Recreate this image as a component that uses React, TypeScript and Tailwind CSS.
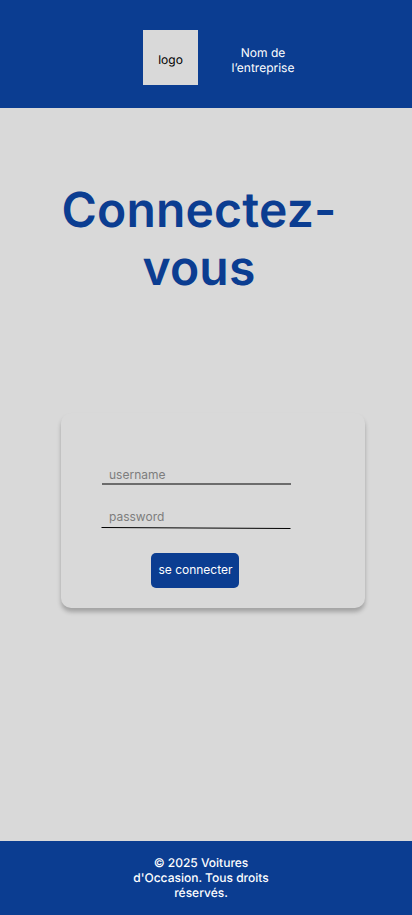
export default function App() {
  return (
    <div className="flex h-[915px] w-[412px] flex-col overflow-hidden bg-[#d9d9d9] font-['Inter',sans-serif] text-xs leading-[15px] [text-rendering:geometricPrecision]">
      <header className="flex h-[108px] shrink-0 items-start bg-[#0b3d91] pt-[30px] pl-[143px]">
        <div className="flex size-[55px] items-center justify-center bg-[#d9d9d9] pt-1 text-black">logo</div>
        <p className="mt-[15px] ml-[25px] w-20 text-center text-white">
          Nom de
          <br />
          l’entreprise
        </p>
      </header>

      <main className="flex flex-1 flex-col">
        <h1 className="mt-[73px] ml-[49px] w-[300px] text-center text-5xl leading-[58px] font-semibold tracking-[0.2px] text-[#0b3d91]">
          Connectez-
          <br />
          vous
        </h1>

        <form
          className="mt-[116px] ml-[61px] flex h-[195px] w-[304px] flex-col rounded-[10px] bg-[#d9d9d9] pt-[54px] pl-[41px] shadow-[0_4px_4px_rgba(0,0,0,0.25)]"
          onSubmit={(e) => e.preventDefault()}
        >
          <input
            aria-label="username"
            placeholder="username"
            className="h-[15px] w-[189px] pl-[7px] outline-none placeholder:text-[#7d7d7d]"
          />
          <div className="mt-px h-0.5 w-[189px] bg-[#6c6c6c]" />
          <input
            type="password"
            aria-label="password"
            placeholder="password"
            className="mt-6 h-[15px] w-[189px] pl-[7px] outline-none placeholder:text-[#7d7d7d]"
          />
          <svg className="mt-[3px] -ml-px h-[3px] w-[190px]" viewBox="0 0 190 3" fill="none" stroke="black">
            <path d="M.5 .5L189.5 1.5" />
          </svg>
          <button
            type="submit"
            className="mt-[23px] ml-[49px] h-[35px] w-[88px] rounded-[5px] bg-[#0b3d91] pb-0.5 pl-px text-center whitespace-nowrap text-white"
          >
            se connecter
          </button>
        </form>
      </main>

      <footer className="h-[74px] shrink-0 bg-[#0b3d91] pt-[14px] text-center font-medium text-white">
        <p className="ml-[131px] w-[140px]">
          © 2025 Voitures
          <br />
          d'Occasion. Tous droits
          <br />
          réservés.
        </p>
      </footer>
    </div>
  );
}
